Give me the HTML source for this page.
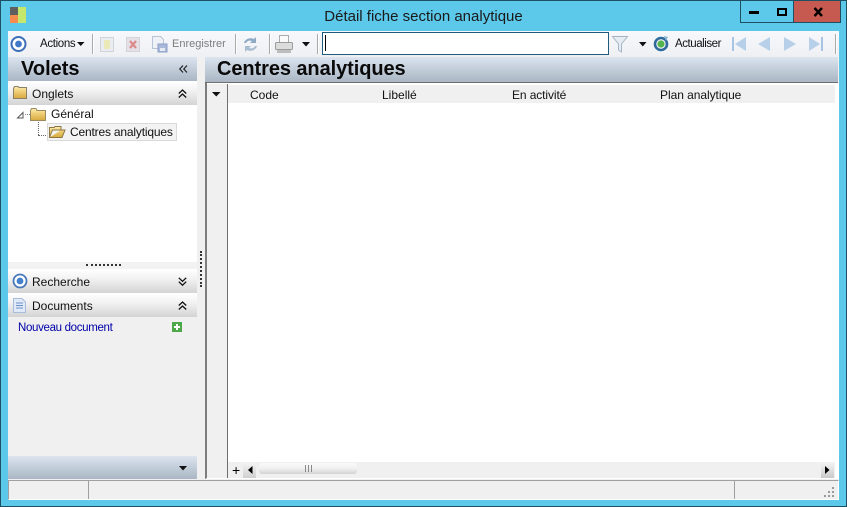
<!DOCTYPE html>
<html lang="fr"><head><meta charset="utf-8">
<style>
html,body{margin:0;padding:0}
body{width:847px;height:507px;overflow:hidden;position:relative;background:#5cc8ea;font-family:"Liberation Sans",sans-serif;font-size:12px;color:#111}
.a,.t{position:absolute}
.t{white-space:nowrap;line-height:14px}
.ph{position:absolute;left:8px;width:189px;height:24px;background:linear-gradient(#fff,#f4f4f4 35%,#d4d4d4)}
.sep{position:absolute;top:34px;width:1px;height:20px;background:#a9a9a9;border-right:1px solid #fff}
svg{position:absolute;overflow:visible}
</style></head><body>
<svg width="0" height="0" style="left:0;top:0"><defs>
<linearGradient id="gold" x1="0" y1="0" x2="0" y2="1"><stop offset="0" stop-color="#fbeeb8"/><stop offset=".35" stop-color="#f1d37c"/><stop offset="1" stop-color="#d6a93e"/></linearGradient>
</defs></svg>
<div class="a" style="left:0;top:0;width:845px;height:505px;border:1px solid #1f4f63"></div>

<!-- app icon -->
<div class="a" style="left:10px;top:7px;width:8px;height:8px;background:#5f5f5f"></div>
<div class="a" style="left:10px;top:15px;width:8px;height:8px;background:#f58b4c"></div>
<div class="a" style="left:18px;top:7px;width:8px;height:16px;background:#c5e86c"></div>
<div class="t" style="left:0;width:847px;text-align:center;top:8px;font-size:15px;line-height:17px;color:#1a1a1a">Détail fiche section analytique</div>

<!-- window buttons -->
<div class="a" style="left:740px;top:0;width:27px;height:21px;border:1px solid #1f4f63;background:#5cc8ea"></div>
<div class="a" style="left:768px;top:0;width:25px;height:21px;border:1px solid #1f4f63;border-left:0;background:#5cc8ea"></div>
<div class="a" style="left:794px;top:0;width:46px;height:21px;border:1px solid #1f4f63;border-left:0;background:#c75a50"></div>
<div class="a" style="left:749px;top:11px;width:10px;height:3px;background:#000"></div>
<div class="a" style="left:777px;top:8px;width:6px;height:4px;border:2px solid #000"></div>
<svg style="left:813px;top:7px" width="11" height="10"><path d="M1.5 1 L9 9 M9 1 L1.5 9" stroke="#000" stroke-width="2.4" fill="none"/></svg>

<!-- main frame -->
<div class="a" style="left:8px;top:31px;width:831px;height:468px;background:#f0f0f0"></div>

<!-- toolbar -->
<div class="a" style="left:8px;top:31px;width:831px;height:26px;background:linear-gradient(#f6f8fb,#eef0f3)"></div>
<svg style="left:10px;top:35px" width="18" height="18"><circle cx="8.5" cy="9" r="7" fill="#fff" stroke="#3b70b8" stroke-width="2"/><circle cx="8.5" cy="9" r="3.4" fill="#3f78c6"/></svg>
<div class="t" style="left:40px;top:37px;font-size:11.5px;letter-spacing:-.35px">Actions</div>
<svg style="left:77px;top:42px" width="8" height="5"><path d="M0 0H7.5L3.75 4Z" fill="#111"/></svg>
<div class="sep" style="left:92px"></div>
<svg style="left:100px;top:37px" width="14" height="15"><rect x=".5" y=".5" width="13" height="14" fill="#e9ecf0" stroke="#cfd4da"/><path d="M4 3h6v9H4z" fill="#ece9b8"/></svg>
<svg style="left:126px;top:37px" width="14" height="15"><rect x=".5" y=".5" width="13" height="14" fill="#e4e0e6" stroke="#d4d4da"/><path d="M4 4l6 7M10 4l-6 7" stroke="#dc8a8a" stroke-width="2.2"/></svg>
<svg style="left:152px;top:36px" width="16" height="17"><path d="M.5.5h8l3 3v9H.5z" fill="#eef1f5" stroke="#b7c4d6"/><rect x="6" y="8" width="9" height="8" fill="#a9b9dc" stroke="#8b9cc4"/><rect x="8" y="12" width="5" height="3" fill="#e6eaf2"/></svg>
<div class="t" style="left:172px;top:37px;font-size:11px;color:#7d7d7d">Enregistrer</div>
<div class="sep" style="left:235px"></div>
<svg style="left:242px;top:36px" width="17" height="17"><path d="M2 7C3 3 8 1 12 3L14 1V7H8L10 5C7 4 5 5 4 7Z" fill="#8ea9c4"/><path d="M15 10C14 14 9 16 5 14L3 16V10H9L7 12C10 13 12 12 13 10Z" fill="#a9bdd1"/></svg>
<div class="sep" style="left:269px"></div>
<svg style="left:275px;top:35px" width="18" height="19"><rect x="4.5" y=".5" width="9" height="7" fill="#fafafa" stroke="#aaa"/><rect x=".5" y="7.5" width="17" height="7" rx="1" fill="#dcdcdc" stroke="#9c9c9c"/><rect x="2" y="15" width="14" height="3" fill="#bdbdbd"/></svg>
<svg style="left:302px;top:42px" width="8" height="5"><path d="M0 0H8L4 4.5Z" fill="#111"/></svg>
<div class="sep" style="left:317px"></div>
<div class="a" style="left:322px;top:32px;width:285px;height:21px;background:#fff;border:1px solid #1f5c7a"></div>
<div class="a" style="left:325px;top:35px;width:1px;height:16px;background:#000"></div>
<svg style="left:612px;top:36px" width="16" height="17"><path d="M.5.5H15.5L9.5 8V16L6.5 14V8Z" fill="#e6ecf2" stroke="#a3b5c4"/></svg>
<svg style="left:639px;top:42px" width="8" height="5"><path d="M0 0H7.5L3.75 4.5Z" fill="#111"/></svg>
<svg style="left:653px;top:36px" width="16" height="16"><circle cx="8" cy="8" r="6" fill="none" stroke="#2f6a9c" stroke-width="2.6"/><circle cx="8" cy="8" r="3.6" fill="#53b34c"/><path d="M11 0l4 1-2 4z" fill="#8ab6d8"/></svg>
<div class="t" style="left:675px;top:37px;font-size:11.5px;letter-spacing:-.45px">Actualiser</div>
<svg style="left:731px;top:37px" width="16" height="14"><path d="M1 0H3V14H1Z" fill="#a9c4e2"/><path d="M15 0V14L4 7Z" fill="#b7cfe9"/></svg>
<svg style="left:758px;top:37px" width="12" height="14"><path d="M12 0V14L0 7Z" fill="#b7cfe9"/></svg>
<svg style="left:784px;top:37px" width="12" height="14"><path d="M0 0V14L12 7Z" fill="#b7cfe9"/></svg>
<svg style="left:809px;top:37px" width="15" height="14"><path d="M0 0V14L11 7Z" fill="#b7cfe9"/><path d="M12 0H14V14H12Z" fill="#a9c4e2"/></svg>
<div class="sep" style="left:835px;width:1px"></div>

<!-- left panel -->
<div class="a" style="left:8px;top:57px;width:189px;height:24px;background:linear-gradient(#dbe4ef,#aab6c4)"></div>
<div class="t" style="left:21px;top:58px;font-size:20px;line-height:23px;font-weight:bold;color:#0a0a0a">Volets</div>
<svg style="left:179px;top:65px" width="9" height="8"><path d="M4 .5L.8 4L4 7.5M8 .5L4.8 4L8 7.5" stroke="#222" stroke-width="1.2" fill="none"/></svg>

<div class="ph" style="top:81px"></div>
<svg style="left:13px;top:86px" width="14" height="13"><path d="M.5 2.5V12.5H13.5V1.5H6L5 .5H1.5Z" fill="url(#gold)" stroke="#8a8066"/></svg>
<div class="t" style="left:32px;top:87px">Onglets</div>
<svg style="left:178px;top:89px" width="9" height="9"><path d="M.8 4.5L4.5 1L8.2 4.5M.8 8.5L4.5 5L8.2 8.5" stroke="#111" stroke-width="1.3" fill="none"/></svg>

<div class="a" style="left:8px;top:105px;width:189px;height:157px;background:#fff"></div>
<svg style="left:17px;top:112px" width="7" height="7"><path d="M6 .5V6H.5Z" fill="#fff" stroke="#555"/></svg>
<div class="a" style="left:25px;top:114px;width:5px;border-top:1px dotted #888"></div>
<svg style="left:30px;top:108px" width="16" height="13"><path d="M.5 2.5V12.5H15.5V2.5H7L6 .5H1.5Z" fill="url(#gold)" stroke="#9a8a5e"/></svg>
<div class="t" style="left:51px;top:107px">Général</div>
<div class="a" style="left:38px;top:122px;height:13px;border-left:1px dotted #666"></div>
<div class="a" style="left:38px;top:135px;width:10px;border-top:1px dotted #666"></div>
<div class="a" style="left:47px;top:123px;width:128px;height:16px;background:#f3f3f3;border:1px solid #d9d9d9"></div>
<svg style="left:49px;top:126px" width="17" height="12"><path d="M.5 11.5V1.5H5L6 .5H12V4H3.5L.5 11.5H13L16 4H12" fill="url(#gold)" stroke="#8d7540"/></svg>
<div class="t" style="left:70px;top:125px;letter-spacing:-.18px">Centres analytiques</div>

<div class="a" style="left:8px;top:262px;width:189px;height:7px;background:#f2f2f2"></div>
<div class="a" style="left:86px;top:264px;width:35px;border-top:2px dotted #333"></div>

<div class="ph" style="top:269px"></div>
<svg style="left:12px;top:273px" width="16" height="16"><circle cx="8" cy="8" r="6.5" fill="#fff" stroke="#4878b8" stroke-width="1.8"/><circle cx="8" cy="8" r="3.4" fill="#4580cb"/></svg>
<div class="t" style="left:32px;top:275px">Recherche</div>
<svg style="left:178px;top:277px" width="9" height="9"><path d="M.8 .8L4.5 4.3L8.2 .8M.8 4.7L4.5 8.2L8.2 4.7" stroke="#111" stroke-width="1.3" fill="none"/></svg>

<div class="ph" style="top:293px"></div>
<svg style="left:13px;top:298px" width="13" height="15"><path d="M.5.5H9L12.5 4V14.5H.5Z" fill="#dfe9f8" stroke="#a8bcdc"/><path d="M3 5H10M3 7.5H10M3 10H10" stroke="#6d8fc8"/></svg>
<div class="t" style="left:32px;top:299px">Documents</div>
<svg style="left:178px;top:301px" width="9" height="9"><path d="M.8 4.5L4.5 1L8.2 4.5M.8 8.5L4.5 5L8.2 8.5" stroke="#111" stroke-width="1.3" fill="none"/></svg>

<div class="t" style="left:18px;top:321px;color:#0000a8;font-size:11.5px;letter-spacing:-.33px">Nouveau document</div>
<div class="a" style="left:172px;top:322px;width:10px;height:10px;background:#4ea84a"></div>
<div class="a" style="left:174px;top:326px;width:6px;height:2px;background:#fff"></div>
<div class="a" style="left:176px;top:324px;width:2px;height:6px;background:#fff"></div>

<div class="a" style="left:8px;top:456px;width:189px;height:23px;background:linear-gradient(#dbe4ef,#aab6c4)"></div>
<svg style="left:179px;top:466px" width="9" height="5"><path d="M0 0H8L4 4.5Z" fill="#111"/></svg>

<!-- splitter -->
<div class="a" style="left:200px;top:251px;height:36px;border-left:2px dotted #333"></div>

<!-- right header -->
<div class="a" style="left:205px;top:57px;width:633px;height:25px;background:linear-gradient(#dbe4ef,#aab6c4);border-bottom:1px solid #6f6f6f"></div>
<div class="t" style="left:217px;top:58px;font-size:20px;line-height:23px;font-weight:bold;color:#0a0a0a;letter-spacing:-.08px">Centres analytiques</div>

<!-- grid -->
<div class="a" style="left:205px;top:83px;width:631px;height:395px;background:#fff;border-left:2px solid #7d7d7d;border-right:1px solid #fff;border-bottom:1px solid #fff"></div>
<div class="a" style="left:207px;top:84px;width:20px;height:394px;background:#f0f0f0;border-right:1px solid #6f6f6f"></div>
<svg style="left:212px;top:92px" width="9" height="5"><path d="M0 0H8.5L4.25 4.5Z" fill="#111"/></svg>
<div class="a" style="left:228px;top:85px;width:607px;height:18px;background:#f0f0f0"></div>
<div class="t" style="left:250px;top:88px">Code</div>
<div class="t" style="left:382px;top:88px">Libellé</div>
<div class="t" style="left:512px;top:88px;letter-spacing:-.1px">En activité</div>
<div class="t" style="left:660px;top:88px;letter-spacing:-.05px">Plan analytique</div>

<!-- hscroll -->
<div class="a" style="left:228px;top:462px;width:607px;height:16px;background:#f0f0f0"></div>
<div class="t" style="left:232px;top:462px;font-size:14px;line-height:16px;color:#000">+</div>
<div class="a" style="left:243px;top:463px;width:13px;height:15px;background:linear-gradient(#f3f3f3,#cfcfcf)"></div>
<svg style="left:248px;top:466px" width="5" height="8"><path d="M4.5 0V8L0 4Z" fill="#000"/></svg>
<div class="a" style="left:259px;top:463px;width:98px;height:11px;border-radius:3px;background:linear-gradient(#fafafa,#f0f0f0 50%,#d2d2d2)"></div>
<div class="a" style="left:305px;top:465px;width:1px;height:7px;background:#888;box-shadow:3px 0 #888,6px 0 #888"></div>
<div class="a" style="left:821px;top:463px;width:13px;height:15px;background:linear-gradient(#f3f3f3,#c9c9c9)"></div>
<svg style="left:825px;top:466px" width="5" height="8"><path d="M0 0V8L4.5 4Z" fill="#000"/></svg>

<!-- status bar -->
<div class="a" style="left:8px;top:480px;width:829px;height:18px;background:#f0f0f0;border:1px solid #a0a0a0;border-right-color:#fff;border-bottom-color:#fff"></div>
<div class="a" style="left:88px;top:481px;width:1px;height:18px;background:#a0a0a0"></div>
<div class="a" style="left:734px;top:481px;width:1px;height:18px;background:#a0a0a0"></div>
<svg style="left:824px;top:487px" width="11" height="11"><path d="M8 0h2v2H8zM4 4h2v2H4zM8 4h2v2H8zM0 8h2v2H0zM4 8h2v2H4zM8 8h2v2H8z" fill="#9a9a9a"/></svg>
</body></html>
